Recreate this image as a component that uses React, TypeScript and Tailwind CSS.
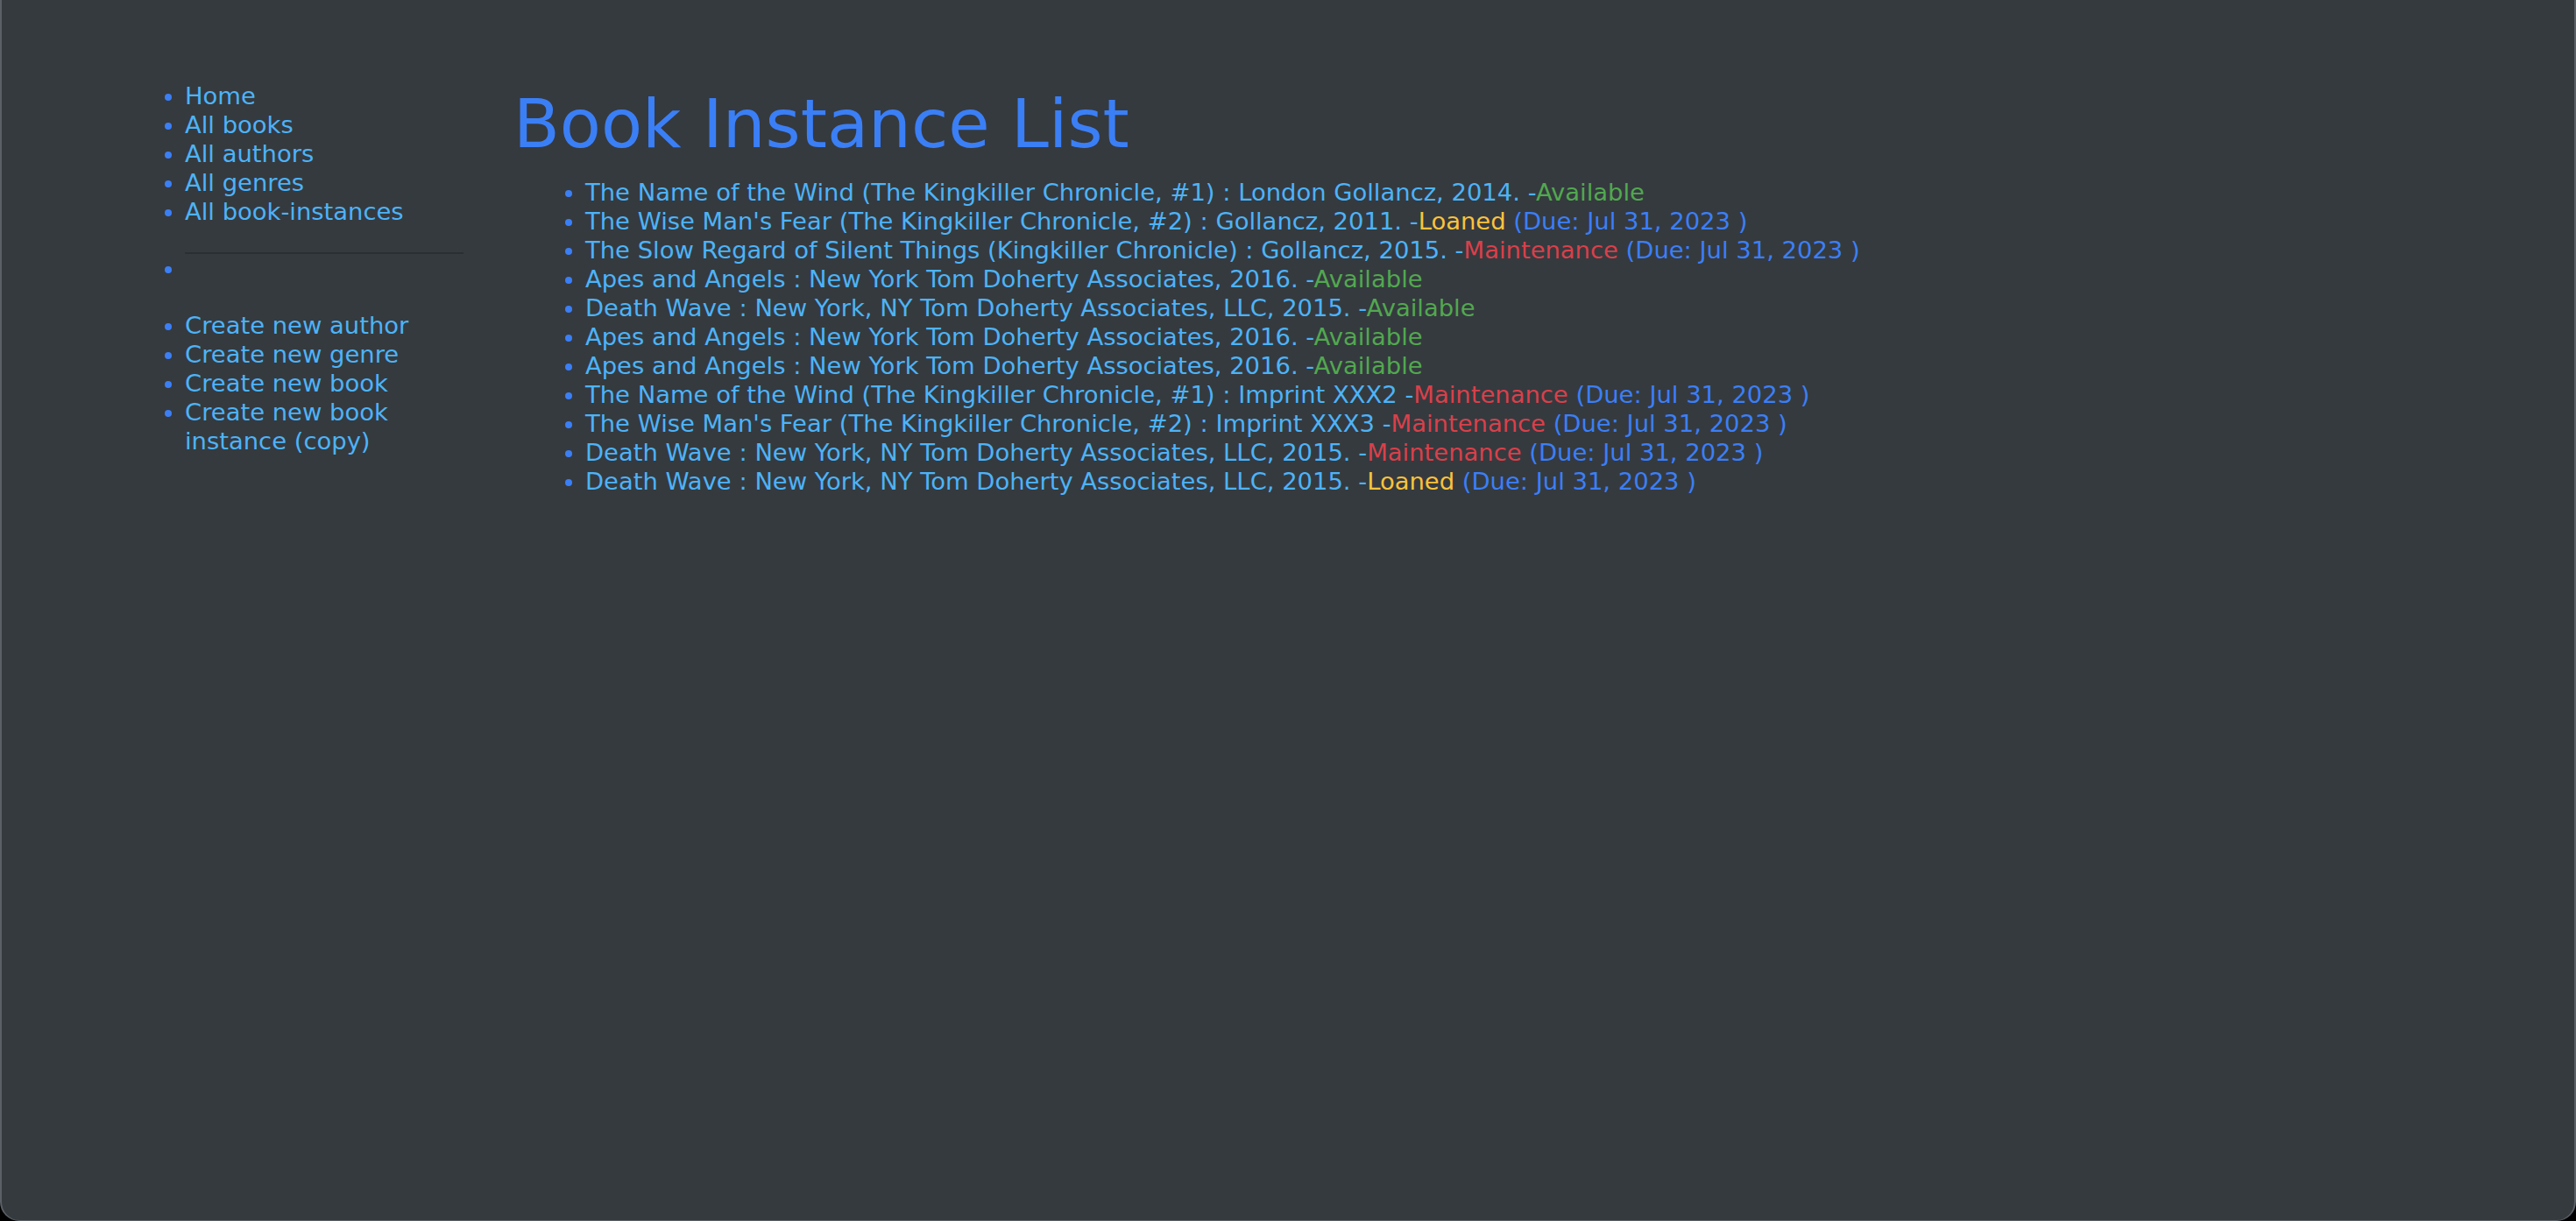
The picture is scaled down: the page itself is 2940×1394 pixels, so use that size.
import React from 'react';

type Status = 'Available' | 'Loaned' | 'Maintenance';

interface BookInstance {
    title: string;
    imprint: string;
    status: Status;
    due?: string;
}

const instances: BookInstance[] = [
    { title: 'The Name of the Wind (The Kingkiller Chronicle, #1)', imprint: 'London Gollancz, 2014.', status: 'Available' },
    { title: "The Wise Man's Fear (The Kingkiller Chronicle, #2)", imprint: 'Gollancz, 2011.', status: 'Loaned', due: 'Jul 31, 2023' },
    { title: 'The Slow Regard of Silent Things (Kingkiller Chronicle)', imprint: 'Gollancz, 2015.', status: 'Maintenance', due: 'Jul 31, 2023' },
    { title: 'Apes and Angels', imprint: 'New York Tom Doherty Associates, 2016.', status: 'Available' },
    { title: 'Death Wave', imprint: 'New York, NY Tom Doherty Associates, LLC, 2015.', status: 'Available' },
    { title: 'Apes and Angels', imprint: 'New York Tom Doherty Associates, 2016.', status: 'Available' },
    { title: 'Apes and Angels', imprint: 'New York Tom Doherty Associates, 2016.', status: 'Available' },
    { title: 'The Name of the Wind (The Kingkiller Chronicle, #1)', imprint: 'Imprint XXX2', status: 'Maintenance', due: 'Jul 31, 2023' },
    { title: "The Wise Man's Fear (The Kingkiller Chronicle, #2)", imprint: 'Imprint XXX3', status: 'Maintenance', due: 'Jul 31, 2023' },
    { title: 'Death Wave', imprint: 'New York, NY Tom Doherty Associates, LLC, 2015.', status: 'Maintenance', due: 'Jul 31, 2023' },
    { title: 'Death Wave', imprint: 'New York, NY Tom Doherty Associates, LLC, 2015.', status: 'Loaned', due: 'Jul 31, 2023' },
];

const statusClass: Record<Status, string> = {
    Available: 'text-[#52a84f]',
    Loaned: 'text-[#fcc23c]',
    Maintenance: 'text-[#d9404a]',
};

const navTop = ['Home', 'All books', 'All authors', 'All genres', 'All book-instances'];
const navCreate = ['Create new author', 'Create new genre', 'Create new book', 'Create new book instance (copy)'];

export default function App() {
    return (
        <div className="w-[2940px] h-[1394px] bg-black overflow-hidden font-['DejaVu_Sans',sans-serif] text-[27.4px] leading-[33px]">
            <div className="w-full h-full bg-[#353a3f] rounded-b-[22px] border-l-2 border-r-2 border-b border-[#5b6067] flex">

                {/* sidebar */}
                <aside className="w-[527px] shrink-0 pl-[209px] pt-[93px]">
                    <ul className="list-disc marker:text-[#3b7ff6] text-[#4db3f7]">
                        {navTop.map((item) => (
                            <li key={item}><a href="#">{item}</a></li>
                        ))}
                        <li className="list-none pt-[30px]">
                            <hr className="border-t-2 border-[#2b2f33]" />
                        </li>
                        <li>&nbsp;</li>
                        <li className="list-none h-[32px]" />
                        {navCreate.map((item) => (
                            <li key={item}><a href="#">{item}</a></li>
                        ))}
                    </ul>
                </aside>

                {/* content */}
                <main className="flex-1 pl-[57px] pt-[94px]">
                    <h1 className="text-[77px] leading-[96px] text-[#3b7ff6]">Book Instance List</h1>
                    <ul className="list-disc marker:text-[#3b7ff6] pl-[82px] mt-[13px] text-[#4db3f7]">
                        {instances.map((b, i) => (
                            <li key={i}>
                                <a href="#">{b.title} : {b.imprint}</a>
                                {' '}-<span className={statusClass[b.status]}>{b.status}</span>
                                {b.due && <span className="text-[#3b7ff6]"> (Due: {b.due} )</span>}
                            </li>
                        ))}
                    </ul>
                </main>
            </div>
        </div>
    );
}
